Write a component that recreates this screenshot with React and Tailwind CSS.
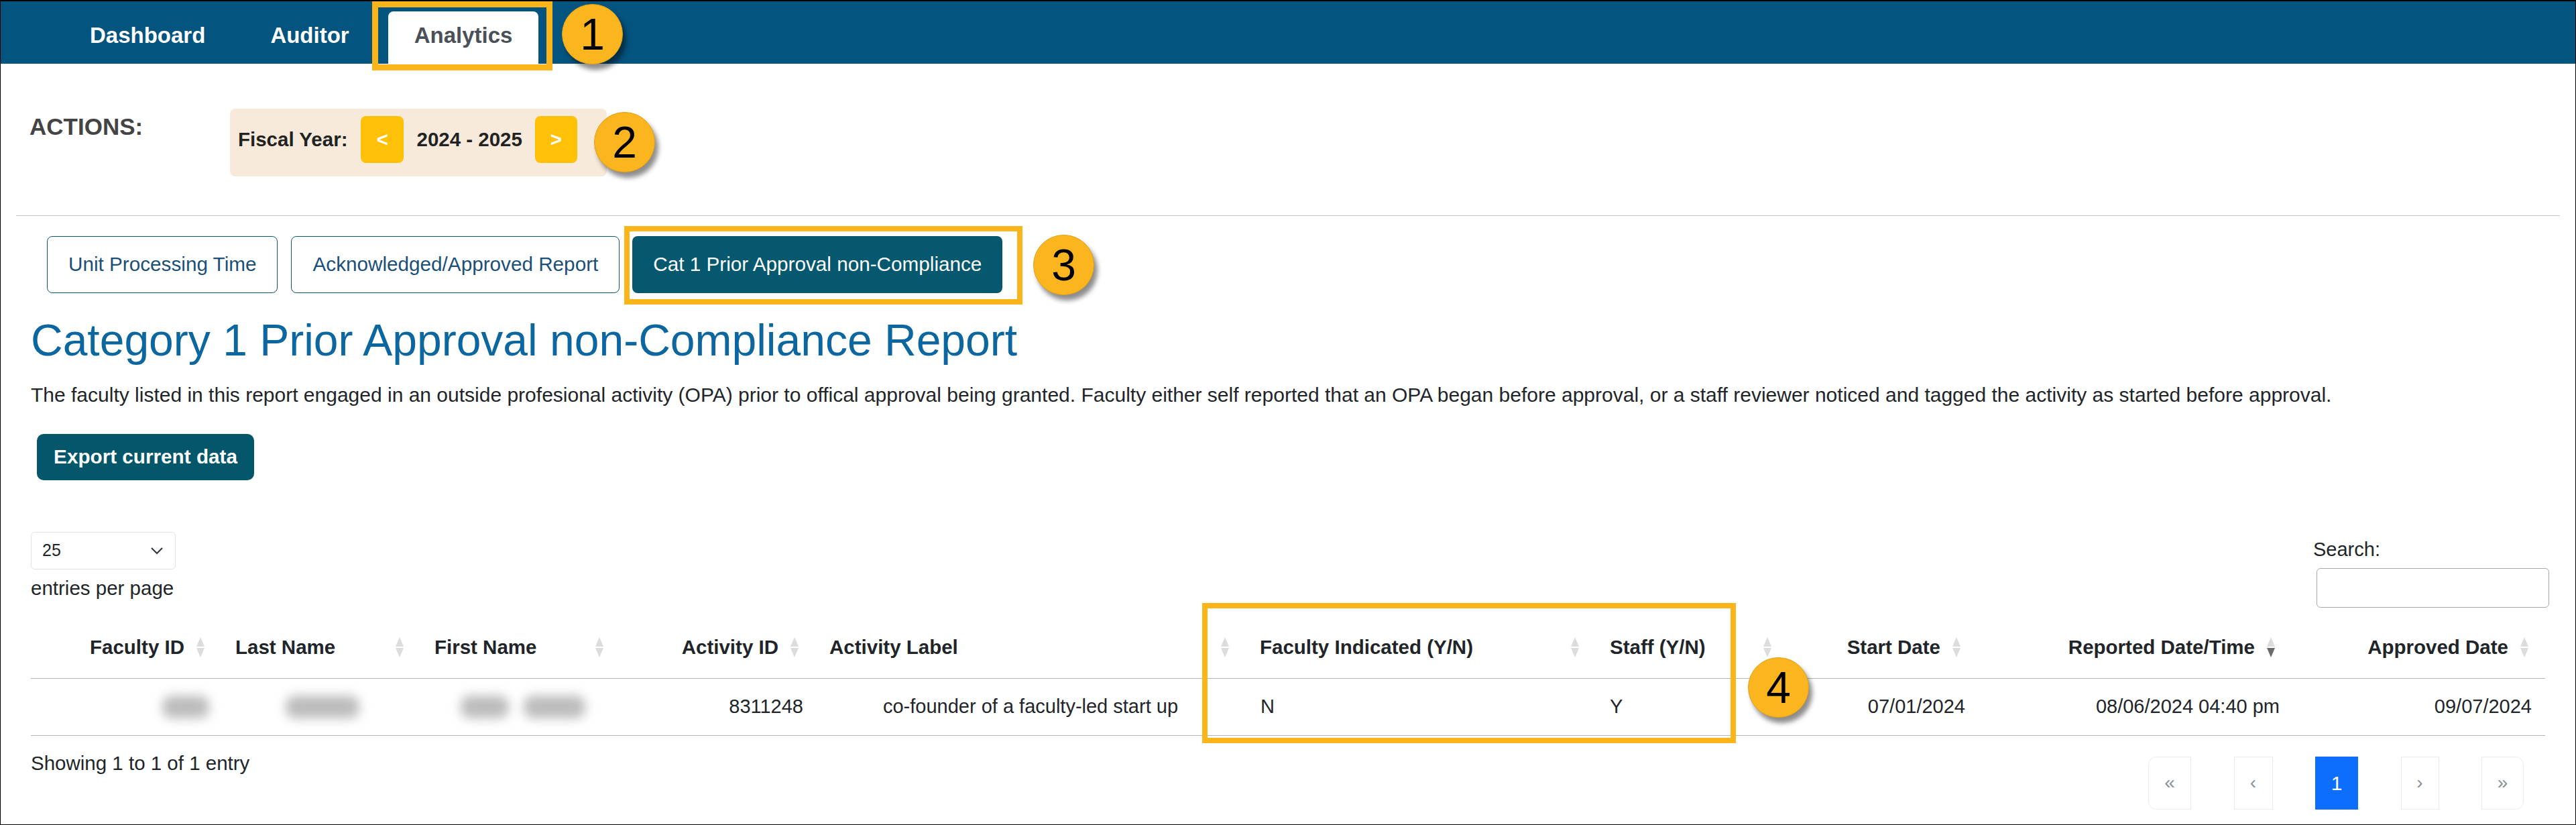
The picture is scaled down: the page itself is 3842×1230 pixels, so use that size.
import React from 'react';

const columns = [
  { label: 'Faculty ID', th: 'w-[284px]', align: 'right' },
  { label: 'Last Name', th: 'w-[297px]', align: 'left' },
  { label: 'First Name', th: 'w-[298px]', align: 'left' },
  { label: 'Activity ID', th: 'w-[291px]', align: 'right' },
  { label: 'Activity Label', th: 'w-[642px]', align: 'left' },
  { label: 'Faculty Indicated (Y/N)', th: 'w-[522px]', align: 'left' },
  { label: 'Staff (Y/N)', th: 'w-[287px]', align: 'left' },
  { label: 'Start Date', th: 'w-[282px]', align: 'right' },
  { label: 'Reported Date/Time', th: 'w-[469px]', align: 'right', active: true },
  { label: 'Approved Date', th: 'w-[378px]', align: 'right' },
];

function SortIcon({ active }) {
  return (
    <svg width="12" height="30" viewBox="0 0 12 30" className="shrink-0">
      <polygon points="6,0 12,14 0,14" fill="#dcdcdc" />
      <polygon points="0,16 12,16 6,30" fill={active ? '#6b6b6b' : '#dcdcdc'} />
    </svg>
  );
}

function Blob({ className }) {
  return <span className={`block h-[34px] rounded-[14px] bg-[#bdbdbd] blur-[8px] ${className}`} />;
}

function Marker({ n, className }) {
  return (
    <div className={`absolute flex h-[90px] w-[91px] items-center justify-center rounded-full border border-[#e0a015] bg-[#fbb61f] text-[66px] leading-none text-black shadow-[5px_8px_7px_rgba(0,0,0,0.45)] ${className}`}>
      {n}
    </div>
  );
}

export default function App() {
  return (
    <div className="relative h-[1230px] w-[3842px] overflow-hidden border border-t-2 border-black bg-white font-['Liberation_Sans',Arial,sans-serif] text-[#212529]">
      {/* top nav */}
      <nav className="flex h-[93px] items-end gap-[19px] bg-[#045480] pl-[94px] text-[33px] font-bold">
        <a className="flex h-[78px] items-center px-[39px] pb-[6px] text-white">Dashboard</a>
        <a className="flex h-[78px] items-center px-[39px] pb-[6px] text-white">Auditor</a>
        <a className="flex h-[78px] items-center rounded-t-[8px] bg-white px-[39px] pb-[6px] text-[#4b5058]">Analytics</a>
      </nav>

      {/* actions */}
      <div className="mt-[67px] flex items-start">
        <span className="ml-[43px] mt-[1px] w-[299px] text-[35px] font-bold text-[#444]">ACTIONS:</span>
        <div className="flex h-[101px] items-start rounded-[8px] bg-[#f8eadb] pl-[12px] pr-[44px] pt-[11px]">
          <div className="flex h-[70px] items-center text-[29.5px] font-bold text-[#222]">
            <span>Fiscal Year:</span>
            <button className="ml-[20px] flex h-[70px] w-[64px] items-center justify-center rounded-[8px] bg-[#ffc107] text-white">&lt;</button>
            <span className="ml-[19px]">2024 - 2025</span>
            <button className="ml-[19px] flex h-[70px] w-[63px] items-center justify-center rounded-[8px] bg-[#ffc107] text-white">&gt;</button>
          </div>
        </div>
      </div>

      <div className="mx-[23px] mt-[58px] h-px bg-[#c4c4c4]" />

      {/* report tabs */}
      <div className="ml-[69px] mt-[30px] flex h-[85px] gap-[20px] text-[29.7px]">
        <button className="flex items-center rounded-[8px] border border-[#0b566c] px-[31px] text-[#1b4f78]">Unit Processing Time</button>
        <button className="flex items-center rounded-[8px] border border-[#0b566c] px-[31px] text-[#1b4f78]">Acknowledged/Approved Report</button>
        <button className="ml-[-1px] flex items-center rounded-[8px] bg-[#05586d] px-[31px] text-white">Cat 1 Prior Approval non-Compliance</button>
      </div>

      <div className="px-[45px]">
        <h2 className="mt-[32px] text-[66px] leading-[76px] text-[#0c67a0]">Category 1 Prior Approval non-Compliance Report</h2>
        <p className="mt-[27px] text-[30px] leading-[34px]">
          The faculty listed in this report engaged in an outside profesional activity (OPA) prior to offical approval being granted. Faculty either self reported that an OPA began before approval, or a staff reviewer noticed and tagged the activity as started before approval.
        </p>
        <button className="ml-[9px] mt-[41px] flex h-[69px] w-[324px] items-center justify-center rounded-[10px] bg-[#04576b] text-[29.7px] font-bold text-white">
          Export current data
        </button>

        {/* table controls */}
        <div className="mt-[77px] flex items-start justify-between">
          <div className="flex flex-col">
            <div className="flex h-[56px] w-[216px] items-center justify-between rounded-[6px] border border-[#dee2e6] pl-[16px] pr-[17px] text-[25px]">
              <span>25</span>
              <svg width="20" height="12" viewBox="0 0 20 12">
                <polyline points="2,2 10,10 18,2" fill="none" stroke="#343a40" strokeWidth="2.2" />
              </svg>
            </div>
            <span className="mt-[11px] text-[29.5px] leading-[34px]">entries per page</span>
          </div>
          <div className="mr-[-6px] flex flex-col pt-[9px]">
            <span className="ml-[-5px] text-[29px] leading-[34px]">Search:</span>
            <input className="mt-[11px] h-[59px] w-[347px] rounded-[6px] border border-[#a8a8a8] outline-none" />
          </div>
        </div>

        {/* table */}
        <table className="mt-[14px] w-[3750px] table-fixed border-collapse">
          <thead>
            <tr className="border-b border-[#b3b3b3]">
              {columns.map((c) => (
                <th key={c.label} className={`h-[91px] p-0 text-[29.5px] font-bold ${c.th}`}>
                  {c.align === 'right' ? (
                    <div className="flex items-center justify-end gap-[18px] pr-[25px]">
                      <span>{c.label}</span>
                      <SortIcon active={c.active} />
                    </div>
                  ) : (
                    <div className="flex items-center justify-between pl-[21px] pr-[25px]">
                      <span>{c.label}</span>
                      <SortIcon />
                    </div>
                  )}
                </th>
              ))}
            </tr>
          </thead>
          <tbody className="text-[29px]">
            <tr className="h-[85px] border-b border-[#b3b3b3]">
              <td className="p-0">
                <div className="flex justify-end pr-[18px]"><Blob className="w-[70px]" /></div>
              </td>
              <td className="p-0">
                <div className="flex pl-[96px]"><Blob className="w-[110px]" /></div>
              </td>
              <td className="p-0">
                <div className="flex gap-[22px] pl-[60px]"><Blob className="w-[72px]" /><Blob className="w-[92px]" /></div>
              </td>
              <td className="p-0 pr-[18px] text-right">8311248</td>
              <td className="p-0 text-center">co-founder of a faculty-led start up</td>
              <td className="p-0 pl-[22px]">N</td>
              <td className="p-0 pl-[21px]">Y</td>
              <td className="p-0 pr-[18px] text-right">07/01/2024</td>
              <td className="p-0 pr-[18px] text-right">08/06/2024 04:40 pm</td>
              <td className="p-0 pr-[20px] text-right">09/07/2024</td>
            </tr>
          </tbody>
        </table>

        {/* footer */}
        <div className="mt-[24px] flex items-start justify-between">
          <span className="text-[29.5px] leading-[34px]">Showing 1 to 1 of 1 entry</span>
          <div className="mr-[32px] mt-[7px] flex h-[79px] gap-[63.5px] text-[28px] text-[#8a8f94]">
            <span className="flex w-[64px] items-center justify-center rounded-l-[12px] border border-[#e9ecef]">«</span>
            <span className="flex w-[58px] items-center justify-center border border-[#e9ecef]">‹</span>
            <span className="flex w-[64px] items-center justify-center bg-[#0d6efd] text-[30px] text-white">1</span>
            <span className="flex w-[57px] items-center justify-center border border-[#e9ecef]">›</span>
            <span className="flex w-[63px] items-center justify-center rounded-r-[12px] border border-[#e9ecef]">»</span>
          </div>
        </div>
      </div>

      {/* annotation overlays */}
      <div className="absolute left-[554px] top-0 h-[103px] w-[269px] border-[9px] border-[#fbb41a]" />
      <div className="absolute left-[930px] top-[335px] h-[117px] w-[594px] border-[8px] border-[#fbb41a]" />
      <div className="absolute left-[1792px] top-[897px] h-[209px] w-[796px] border-[8px] border-[#fbb41a]" />
      <Marker n="1" className="left-[837px] top-[4px]" />
      <Marker n="2" className="left-[885px] top-[165px]" />
      <Marker n="3" className="left-[1540px] top-[348px]" />
      <Marker n="4" className="left-[2606px] top-[978px]" />
    </div>
  );
}
